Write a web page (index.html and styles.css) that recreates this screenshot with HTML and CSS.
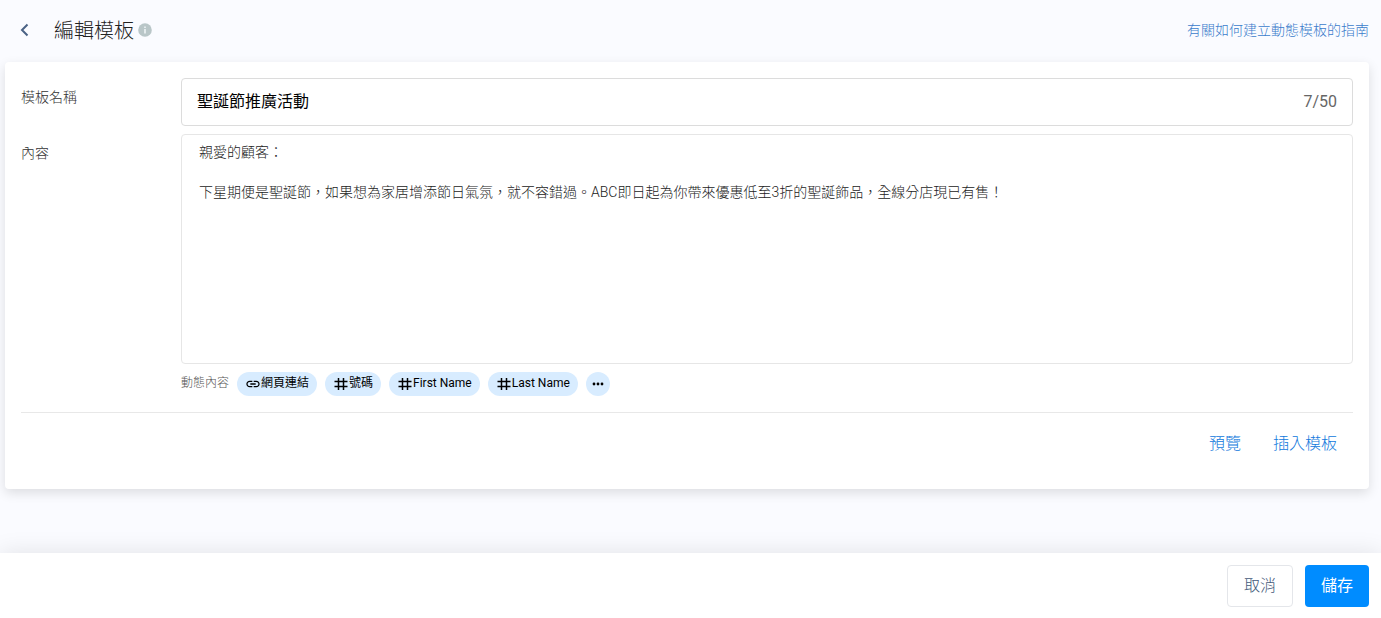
FILE: index.html
```html
<!DOCTYPE html>
<html lang="zh-Hant">
<head>
<meta charset="utf-8">
<meta name="viewport" content="width=device-width, initial-scale=1">
<title>編輯模板</title>
<link rel="stylesheet" href="styles.css">
</head>
<body class="page">
  <header class="header">
    <button class="back" type="button" aria-label="返回">
      <svg width="24" height="24" viewBox="0 0 24 24" fill="none" stroke="#4a6285" stroke-width="2"><path d="M15.500 6.500 10 12l5.500 5.500"/></svg>
    </button>
    <h1 class="title">編輯模板</h1>
    <svg class="info" width="14" height="14" viewBox="0 0 14 14" aria-hidden="true"><circle cx="7" cy="7" r="6.800" fill="#b9c6c8"/><path d="M6.200 3.500h1.600v1.600H6.200zM6.200 6.100h1.600v4.400H6.200z" fill="#eef3f6"/></svg>
    <a class="guide" href="#">有關如何建立動態模板的指南</a>
  </header>
  <main class="card">
    <div class="form">
      <label class="label" for="name">模板名稱</label>
      <div class="field">
        <input class="field-input" id="name" type="text" maxlength="50" value="聖誕節推廣活動">
        <span class="count">7/50</span>
      </div>
      <label class="label" for="content">內容</label>
      <div class="editor">
        <textarea class="content" id="content">親愛的顧客：

下星期便是聖誕節，如果想為家居增添節日氣氛，就不容錯過。ABC即日起為你帶來優惠低至3折的聖誕飾品，全線分店現已有售！</textarea>
        <div class="chips">
          <span class="chips-label">動態內容</span>
          <button class="chip" type="button"><svg width="16" height="16" viewBox="0 0 24 24" fill="currentColor"><path d="M3.900 12c0-1.710 1.390-3.100 3.100-3.100h4V7H7c-2.760 0-5 2.240-5 5s2.240 5 5 5h4v-1.900H7c-1.710 0-3.100-1.390-3.100-3.100zM8 13h8v-2H8v2zm9-6h-4v1.900h4c1.710 0 3.100 1.390 3.100 3.100s-1.390 3.100-3.100 3.100h-4V17h4c2.760 0 5-2.240 5-5s-2.240-5-5-5z"/></svg><span class="chip-text">網頁連結</span></button>
          <button class="chip" type="button"><svg width="16" height="16" viewBox="0 0 16 16" fill="none" stroke="currentColor" stroke-width="1.500"><path d="M5.500 2v12M10.500 2v12M1.500 5.500h13M1.500 10.500h13"/></svg><span class="chip-text">號碼</span></button>
          <button class="chip" type="button"><svg width="16" height="16" viewBox="0 0 16 16" fill="none" stroke="currentColor" stroke-width="1.500"><path d="M5.500 2v12M10.500 2v12M1.500 5.500h13M1.500 10.500h13"/></svg><span class="chip-text">First Name</span></button>
          <button class="chip" type="button"><svg width="16" height="16" viewBox="0 0 16 16" fill="none" stroke="currentColor" stroke-width="1.500"><path d="M5.500 2v12M10.500 2v12M1.500 5.500h13M1.500 10.500h13"/></svg><span class="chip-text">Last Name</span></button>
          <button class="chip chip-more" type="button" aria-label="更多"><svg width="16" height="16" viewBox="0 0 16 16" fill="currentColor"><circle cx="4" cy="8" r="1.400"/><circle cx="8" cy="8" r="1.400"/><circle cx="12" cy="8" r="1.400"/></svg></button>
        </div>
      </div>
    </div>
    <div class="actions">
      <button class="text-button" type="button">預覽</button>
      <button class="text-button" type="button">插入模板</button>
    </div>
  </main>
  <footer class="footer">
    <button class="button" type="button">取消</button>
    <button class="button button-primary" type="button">儲存</button>
  </footer>
</body>
</html>
```
FILE: styles.css
```css
* {
  box-sizing: border-box;
}

.page {
  margin: 0;
  min-height: 100vh;
  display: flex;
  flex-direction: column;
  background: #fafbff;
  color: #333;
  font: 300 14px/20px Roboto, "Noto Sans CJK TC", sans-serif;
}

button,
input,
textarea {
  font: inherit;
  color: inherit;
}

button {
  padding: 0;
  border: 0;
  background: none;
  cursor: pointer;
}

.header {
  display: flex;
  align-items: center;
  height: 62px;
  padding: 0 12px 2px;
}

.back {
  display: flex;
  margin-right: 18px;
}

.title {
  margin: 0 4px 0 0;
  padding-top: 2px;
  font-size: 20px;
  font-weight: 300;
  line-height: 28px;
  color: #222;
}

.guide {
  margin-left: auto;
  color: #3a7bcb;
  text-decoration: none;
}

.card {
  margin: 0 12px 64px 5px;
  padding: 16px;
  background: #fff;
  border-radius: 4px;
  box-shadow: 0 4px 12px rgba(0, 0, 0, 0.12);
}

.form {
  display: grid;
  grid-template-columns: 160px 1fr;
  row-gap: 8px;
  padding-bottom: 16px;
  border-bottom: 1px solid #e8e8e8;
}

.label {
  padding-top: 9px;
}

.field {
  display: flex;
  align-items: center;
  height: 48px;
  padding: 0 15px;
  border: 1px solid #dcdcdc;
  border-radius: 4px;
  font-size: 16px;
  font-weight: 400;
}

.field-input {
  flex: 1;
  min-width: 0;
  padding: 0;
  border: 0;
  outline: 0;
  background: none;
  color: #000;
}

.count {
  color: #666;
}

.content {
  display: block;
  width: 100%;
  height: 230px;
  padding: 7px 17px;
  border: 1px solid #e6e6e6;
  border-radius: 4px;
  outline: 0;
  resize: none;
  background: none;
  color: #222;
}

.chips {
  display: flex;
  align-items: center;
  gap: 8px;
  margin-top: 8px;
  font-size: 12px;
}

.chips-label {
  padding-bottom: 2px;
  color: #555;
}

.chip {
  display: flex;
  align-items: center;
  height: 24px;
  padding: 0 8px;
  border-radius: 12px;
  background: #d8ecff;
  color: #000;
  font-weight: 400;
}

.chip-text {
  padding-bottom: 2px;
}

.chip-more {
  padding: 0 4px;
}

.actions {
  display: flex;
  justify-content: flex-end;
  gap: 32px;
  padding: 21px 16px 19px;
}

.text-button {
  color: #0f78dc;
  font-size: 16px;
}

.footer {
  display: flex;
  justify-content: flex-end;
  gap: 12px;
  margin-top: auto;
  padding: 12px;
  background: #fff;
  box-shadow: 0 0 24px rgba(0, 0, 0, 0.1);
}

.button {
  height: 42px;
  padding: 0 16px;
  border: 1px solid #e4e6ea;
  border-radius: 4px;
  color: #435878;
  font-size: 16px;
}

.button-primary {
  border: 0;
  background: #008cff;
  color: #fff;
  font-weight: 400;
}
```
